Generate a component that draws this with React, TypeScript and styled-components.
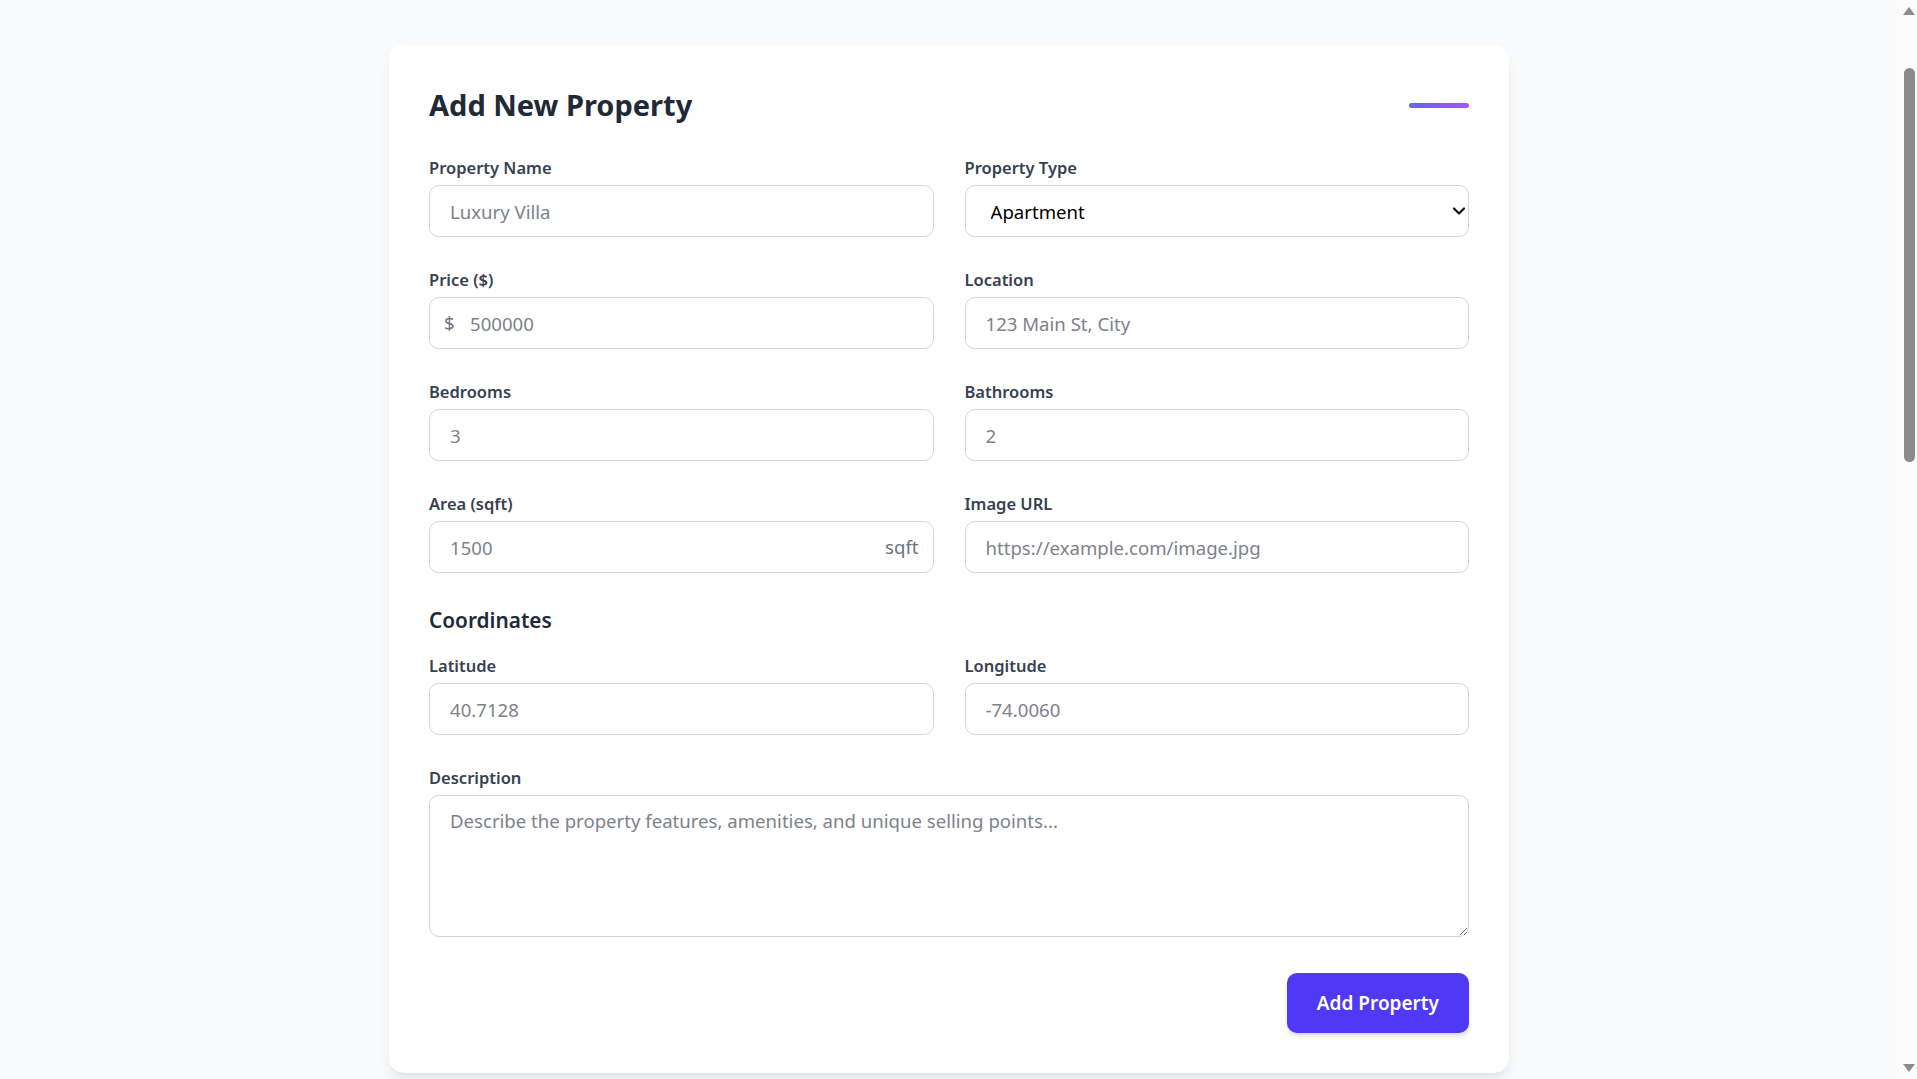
import React from "react";
import styled, { createGlobalStyle } from "styled-components";
import { ChevronDown } from "lucide-react";

const GlobalStyle = createGlobalStyle`
  html, body { background: #f9fafb; }
  body {
    margin: 0;
    font-family: "Noto Sans", "Open Sans", sans-serif;
    color: #000;
  }
  * { box-sizing: border-box; }
`;

const Page = styled.main`
  min-height: 100vh;
  padding: 45px 19px 0 0;
`;

const Card = styled.section`
  width: 1120px;
  margin: 0 auto;
  background: #ffffff;
  border-radius: 15px;
  padding: 40px;
  box-shadow: 0 10px 15px -3px rgba(0, 0, 0, 0.08), 0 4px 6px -4px rgba(0, 0, 0, 0.08);
`;

const Header = styled.header`
  display: flex;
  justify-content: space-between;
  align-items: center;
  margin-bottom: 30px;
`;

const Title = styled.h2`
  margin: 0;
  font-size: 29px;
  line-height: 40px;
  font-weight: 700;
  color: #1f2937;
`;

const AccentBar = styled.div`
  width: 60px;
  height: 5px;
  border-radius: 9999px;
  background: linear-gradient(90deg, #6366f1, #a855f7);
`;

const Form = styled.form`
  display: flex;
  flex-direction: column;
  gap: 30px;
`;

const Grid = styled.div`
  display: grid;
  grid-template-columns: 1fr 1fr;
  column-gap: 31px;
  row-gap: 30px;
`;

const Field = styled.div`
  display: flex;
  flex-direction: column;
`;

const Label = styled.label`
  display: block;
  font-size: 16.5px;
  line-height: 25px;
  font-weight: 600;
  color: #374151;
  margin-bottom: 5px;
`;

const InputWrap = styled.div`
  position: relative;
`;

const Input = styled.input<{ $padLeft?: number; $padRight?: number }>`
  display: block;
  width: 100%;
  height: 52px;
  padding: 0 ${(p) => p.$padRight ?? 20}px 0 ${(p) => p.$padLeft ?? 20}px;
  border: 1px solid #d1d5db;
  border-radius: 10px;
  background: #fff;
  font-family: inherit;
  font-size: 18.6px;
  color: #000;
  outline: none;
  &::placeholder {
    color: #7d828b;
  }
`;

const Affix = styled.span<{ $side: "left" | "right" }>`
  position: absolute;
  top: 50%;
  transform: translateY(-50%);
  ${(p) => (p.$side === "left" ? "left: 15px;" : "right: 15px;")}
  font-size: 18.6px;
  line-height: 30px;
  color: #6b7280;
  pointer-events: none;
`;

const Select = styled.select`
  display: block;
  width: 100%;
  height: 52px;
  padding: 0 36px 0 25px;
  border: 1px solid #d1d5db;
  border-radius: 10px;
  background: #fff;
  font-family: inherit;
  font-size: 18.6px;
  color: #000;
  appearance: none;
  -webkit-appearance: none;
  outline: none;
`;

const SelectIcon = styled.span`
  position: absolute;
  right: 0;
  top: 50%;
  transform: translateY(-50%);
  display: flex;
  color: #111;
  pointer-events: none;
`;

const SectionTitle = styled.h3`
  margin: 0 0 15px;
  font-size: 20.8px;
  line-height: 35px;
  font-weight: 600;
  color: #1f2937;
`;

const TextArea = styled.textarea`
  display: block;
  width: 100%;
  height: 142px;
  padding: 10px 20px;
  border: 1px solid #d1d5db;
  border-radius: 10px;
  font-family: inherit;
  font-size: 18.6px;
  line-height: 30px;
  color: #000;
  resize: vertical;
  outline: none;
  &::placeholder {
    color: #7d828b;
  }
`;

const Actions = styled.div`
  display: flex;
  justify-content: flex-end;
  padding-top: 6px;
`;

const SubmitButton = styled.button`
  height: 60px;
  padding: 0 30px;
  border: none;
  border-radius: 10px;
  background: #4f39f6;
  color: #fff;
  font-family: inherit;
  font-size: 19px;
  font-weight: 600;
  box-shadow: 0 4px 6px -1px rgba(0, 0, 0, 0.12), 0 2px 4px -2px rgba(0, 0, 0, 0.12);
  cursor: pointer;
`;

/* Window scrollbar drawn over the right edge */
const ScrollTrack = styled.div`
  position: fixed;
  top: 0;
  right: 0;
  bottom: 0;
  width: 17px;
  background: #fbfbfb;
  display: flex;
  flex-direction: column;
  align-items: center;
`;

const ScrollArrow = styled.svg<{ $bottom?: boolean }>`
  flex: none;
  width: 17px;
  height: 17px;
  margin-top: ${(p) => (p.$bottom ? "auto" : "0")};
`;

const ScrollThumb = styled.div`
  flex: none;
  width: 11px;
  height: 394px;
  margin-top: 51px;
  margin-left: 1px;
  border-radius: 6px;
  background: #8b8b8b;
`;

type FieldDef = {
  label: string;
  placeholder: string;
  type?: string;
  prefix?: string;
  suffix?: string;
};

const TextField: React.FC<FieldDef> = ({ label, placeholder, type = "text", prefix, suffix }) => (
  <Field>
    <Label>{label}</Label>
    <InputWrap>
      {prefix && <Affix $side="left">{prefix}</Affix>}
      <Input
        type={type}
        placeholder={placeholder}
        $padLeft={prefix ? 40 : 20}
        $padRight={suffix ? 64 : 20}
      />
      {suffix && <Affix $side="right">{suffix}</Affix>}
    </InputWrap>
  </Field>
);

export default function App() {
  return (
    <>
      <GlobalStyle />
      <Page>
        <Card>
          <Header>
            <Title>Add New Property</Title>
            <AccentBar />
          </Header>
          <Form onSubmit={(e) => e.preventDefault()}>
            <Grid>
              <TextField label="Property Name" placeholder="Luxury Villa" />
              <Field>
                <Label>Property Type</Label>
                <InputWrap>
                  <Select defaultValue="Apartment">
                    <option>Apartment</option>
                    <option>House</option>
                    <option>Villa</option>
                    <option>Condo</option>
                  </Select>
                  <SelectIcon>
                    <ChevronDown size={20} strokeWidth={2.6} />
                  </SelectIcon>
                </InputWrap>
              </Field>
              <TextField label="Price ($)" placeholder="500000" prefix="$" />
              <TextField label="Location" placeholder="123 Main St, City" />
              <TextField label="Bedrooms" placeholder="3" />
              <TextField label="Bathrooms" placeholder="2" />
              <TextField label="Area (sqft)" placeholder="1500" suffix="sqft" />
              <TextField label="Image URL" placeholder="https://example.com/image.jpg" />
            </Grid>
            <div>
              <SectionTitle>Coordinates</SectionTitle>
              <Grid>
                <TextField label="Latitude" placeholder="40.7128" />
                <TextField label="Longitude" placeholder="-74.0060" />
              </Grid>
            </div>
            <Field>
              <Label>Description</Label>
              <TextArea placeholder="Describe the property features, amenities, and unique selling points..." />
            </Field>
            <Actions>
              <SubmitButton type="submit">Add Property</SubmitButton>
            </Actions>
          </Form>
        </Card>
      </Page>
      <ScrollTrack aria-hidden="true">
        <ScrollArrow viewBox="0 0 17 17">
          <polygon points="3,15 9,7 15,15" fill="#8b8b8b" />
        </ScrollArrow>
        <ScrollThumb />
        <ScrollArrow $bottom viewBox="0 0 17 17">
          <polygon points="3,2 9,10 15,2" fill="#8b8b8b" />
        </ScrollArrow>
      </ScrollTrack>
    </>
  );
}
